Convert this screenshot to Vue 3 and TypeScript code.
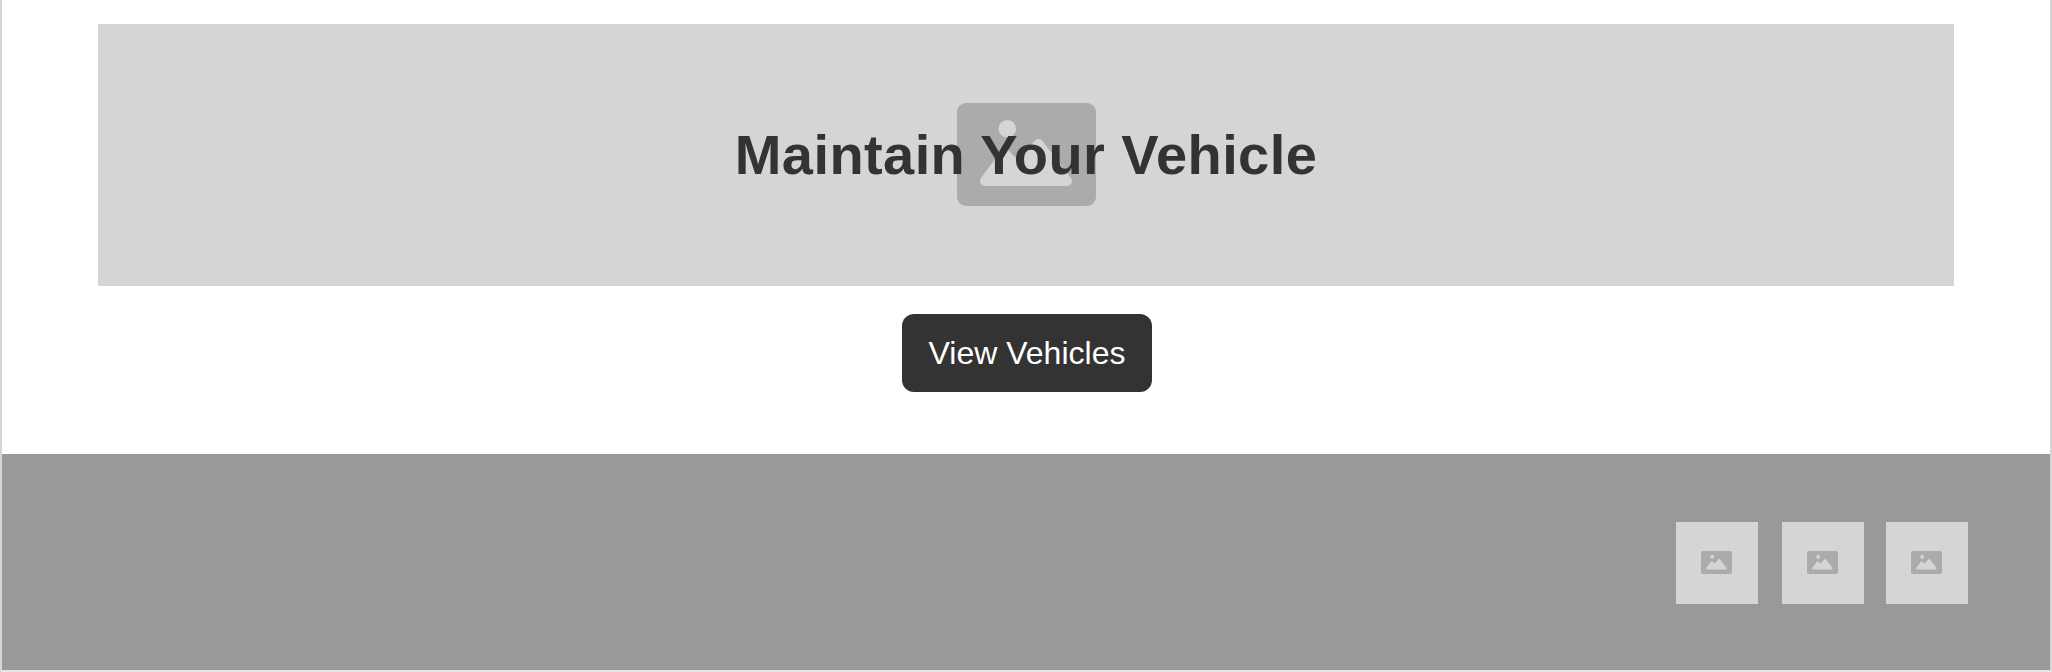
<script setup lang="ts">
import { defineComponent, h } from 'vue'

const PictureIcon = defineComponent({
  render: () =>
    h('svg', { viewBox: '0 0 139 103', 'aria-hidden': 'true' }, [
      h('rect', { width: 139, height: 103, rx: 9, fill: '#ababab' }),
      h('circle', { cx: 50.3, cy: 25.8, r: 8.8, fill: '#d5d5d5' }),
      h('path', {
        d: 'M28 78 L48 51 L61 64 L81.5 41 L110 78 Z',
        fill: '#d5d5d5',
        stroke: '#d5d5d5',
        'stroke-width': 10,
        'stroke-linejoin': 'round',
      }),
    ]),
})

const socialLinks: string[] = ['first', 'second', 'third']
</script>

<template>
  <div class="page">
    <main class="content">
      <section class="hero">
        <PictureIcon class="hero-icon" />
        <h1>Maintain Your Vehicle</h1>
      </section>
      <button class="cta" type="button">View Vehicles</button>
    </main>
    <footer class="footer">
      <div v-for="link in socialLinks" :key="link" class="tile" :class="link">
        <PictureIcon class="tile-icon" />
      </div>
    </footer>
  </div>
</template>

<style>
body {
  margin: 0;
  background: #e6e6e6;
}
</style>

<style scoped>
.page {
  box-sizing: border-box;
  height: 672px;
  border: solid #d5d5d5;
  border-width: 0 2px;
  border-bottom: 2px solid #e6e6e6;
  background: #fff;
  font-family: "Liberation Sans", Arial, sans-serif;
  overflow: hidden;
}
.content {
  box-sizing: border-box;
  height: 454px;
  padding: 24px 96px 0;
  display: flex;
  flex-direction: column;
  align-items: center;
}
.hero {
  width: 100%;
  height: 262px;
  display: grid;
  place-items: center;
  background: #d5d5d5;
}
.hero-icon,
h1 {
  grid-area: 1 / 1;
}
.hero-icon {
  width: 139px;
  height: 103px;
  margin: 0 0 1px 1px;
}
h1 {
  margin: 0 0 1px;
  color: #333;
  font-size: 56px;
  line-height: 63px;
  letter-spacing: 0.42px;
  white-space: nowrap;
}
.cta {
  width: 250px;
  height: 78px;
  margin: 28px 0 0 2px;
  padding: 0;
  border: 0;
  border-radius: 12px;
  background: #333;
  color: #fff;
  font: 32px/36px "Liberation Sans", Arial, sans-serif;
}
.footer {
  box-sizing: border-box;
  height: 216px;
  padding: 68px 82px 0 0;
  display: flex;
  justify-content: flex-end;
  background: #999;
}
.tile {
  width: 82px;
  height: 82px;
  display: grid;
  place-items: center;
  background: #d5d5d5;
}
.second {
  margin: 0 22px 0 24px;
}
.tile-icon {
  width: 31px;
  height: 23px;
  margin: 0 1px 1px 0;
}
</style>
